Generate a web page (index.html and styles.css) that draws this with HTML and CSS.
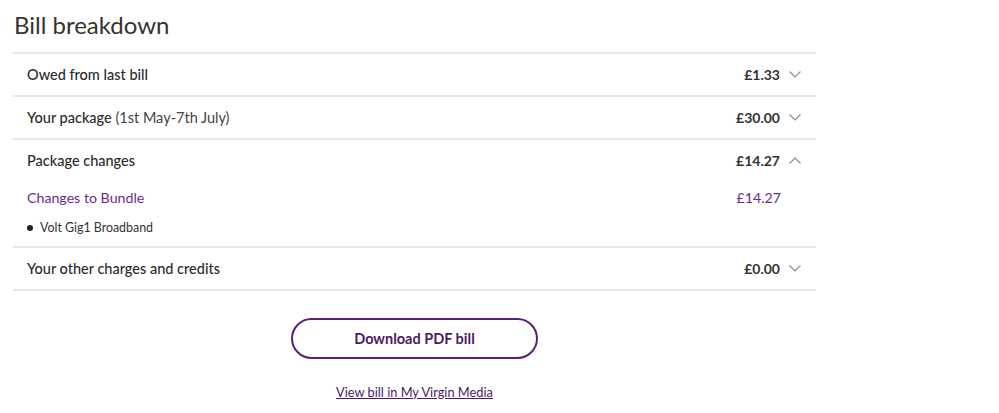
FILE: index.html
```html
<!DOCTYPE html>
<html lang="en">
<head>
<meta charset="utf-8">
<title>Bill breakdown</title>
<link rel="stylesheet" href="styles.css">
</head>
<body>
<main class="wrap">
  <h1 class="title">Bill breakdown</h1>
  <div class="list">
    <div class="row">
      <div class="row-head">
        <span class="label">Owed from last bill</span>
        <span class="right"><span class="amount">£1.33</span><svg class="chev" viewBox="0 0 12 7"><path d="M0.5 0.5 L6 6 L11.5 0.5"/></svg></span>
      </div>
    </div>
    <div class="row">
      <div class="row-head">
        <span class="label">Your package <span class="light">(1st May-7th July)</span></span>
        <span class="right"><span class="amount">£30.00</span><svg class="chev" viewBox="0 0 12 7"><path d="M0.5 0.5 L6 6 L11.5 0.5"/></svg></span>
      </div>
    </div>
    <div class="row">
      <div class="row-head">
        <span class="label">Package changes</span>
        <span class="right"><span class="amount">£14.27</span><svg class="chev" viewBox="0 0 12 7"><path d="M0.5 6.5 L6 1 L11.5 6.5"/></svg></span>
      </div>
      <div class="row-body">
        <div class="sub">
          <span class="sub-label">Changes to Bundle</span>
          <span class="sub-amount">£14.27</span>
        </div>
        <ul class="items">
          <li>Volt Gig1 Broadband</li>
        </ul>
      </div>
    </div>
    <div class="row">
      <div class="row-head">
        <span class="label">Your other charges and credits</span>
        <span class="right"><span class="amount">£0.00</span><svg class="chev" viewBox="0 0 12 7"><path d="M0.5 0.5 L6 6 L11.5 0.5"/></svg></span>
      </div>
    </div>
  </div>
  <div class="actions">
    <button class="btn">Download PDF bill</button>
    <a class="link" href="#">View bill in My Virgin Media</a>
  </div>
</main>
</body>
</html>
```
FILE: styles.css
```css
* { box-sizing: border-box; }
body {
  margin: 0;
  background: #fff;
  font-family: Lato, "Noto Sans", "Liberation Sans", sans-serif;
  color: #2b2b2b;
}
.wrap {
  width: 816px;
  padding-left: 13px;
}
.title {
  margin: 10px 0 12px 1px;
  font-size: 24px;
  line-height: 30px;
  font-weight: 400;
  color: #333;
}
.list {
  border-bottom: 2px solid #e7e7e7;
}
.row {
  border-top: 2px solid #e7e7e7;
}
.row-head {
  display: flex;
  justify-content: space-between;
  align-items: center;
  height: 41px;
  padding: 0 15px 0 14px;
  font-size: 14.5px;
}
.label {
  font-weight: 500;
  color: #2b2b2b;
}
.light {
  font-weight: 400;
  color: #444;
}
.right {
  display: flex;
  align-items: center;
  gap: 9px;
}
.amount {
  font-weight: 700;
  font-size: 14px;
  color: #333;
}
.chev {
  width: 12px;
  height: 7px;
  fill: none;
  stroke: #8a8a8a;
  stroke-width: 1.1;
}
.row-body {
  padding: 6px 35px 8px 14px;
}
.sub {
  display: flex;
  justify-content: space-between;
  align-items: center;
  line-height: 22px;
  font-size: 14.2px;
  color: #6c2b8d;
}
.items {
  margin: 9px 0 0;
  padding: 0;
  list-style: none;
}
.items li {
  position: relative;
  padding-left: 13px;
  font-size: 12.4px;
  line-height: 20px;
  color: #333;
}
.items li::before {
  content: "";
  position: absolute;
  left: 0;
  top: 7px;
  width: 6px;
  height: 6px;
  border-radius: 50%;
  background: #222;
}
.actions {
  display: flex;
  flex-direction: column;
  align-items: center;
  padding-top: 27px;
}
.btn {
  width: 247px;
  height: 41px;
  border: 2px solid #5c1f78;
  border-radius: 21px;
  background: #fff;
  color: #4b1a63;
  font-family: inherit;
  font-size: 14.5px;
  font-weight: 700;
  cursor: pointer;
}
.link {
  margin-top: 24px;
  font-size: 12.8px;
  line-height: 18px;
  color: #4b1a63;
  text-decoration: underline;
}
```
